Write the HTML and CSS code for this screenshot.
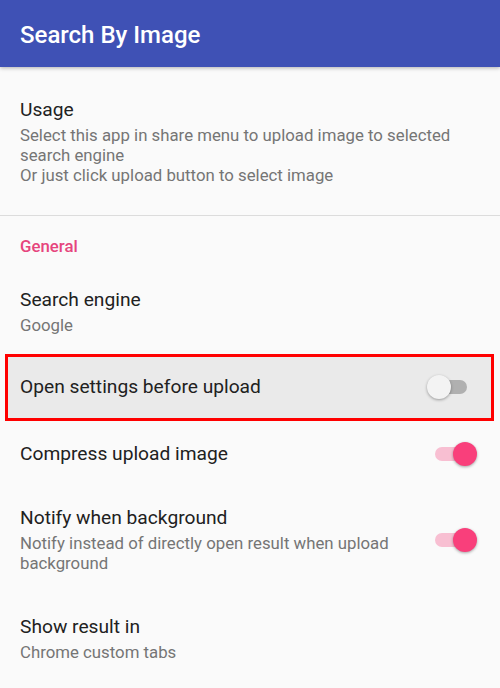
FILE: index.html
```html
<!DOCTYPE html>
<html>
<head>
	<meta charset="utf-8">
	<title>Search By Image</title>
	<link rel="stylesheet" href="styles.css">
</head>
<body>
	<div class="toolbar">
		<h1>Search By Image</h1>
	</div>
	<div class="prefs">
		<div class="item usage">
			<div class="text">
				<div class="title">Usage</div>
				<div class="summary">Select this app in share menu to upload image to selected search engine<br>Or just click upload button to select image</div>
			</div>
		</div>
		<div class="divider"></div>
		<div class="category">General</div>
		<div class="item engine">
			<div class="text">
				<div class="title">Search engine</div>
				<div class="summary">Google</div>
			</div>
		</div>
		<div class="highlight">
			<div class="item">
				<div class="text">
					<div class="title">Open settings before upload</div>
				</div>
				<div class="switch">
					<div class="track"></div>
					<div class="thumb"></div>
				</div>
			</div>
		</div>
		<div class="item compress">
			<div class="text">
				<div class="title">Compress upload image</div>
			</div>
			<div class="switch on">
				<div class="track"></div>
				<div class="thumb"></div>
			</div>
		</div>
		<div class="item notify">
			<div class="text">
				<div class="title">Notify when background</div>
				<div class="summary">Notify instead of directly open result when upload background</div>
			</div>
			<div class="switch on">
				<div class="track"></div>
				<div class="thumb"></div>
			</div>
		</div>
		<div class="item result">
			<div class="text">
				<div class="title">Show result in</div>
				<div class="summary">Chrome custom tabs</div>
			</div>
		</div>
	</div>
</body>
</html>
```
FILE: styles.css
```css
body{
	margin: 0;
	background-color: #fafafa;
	font-family: Roboto, "Noto Sans", sans-serif;
	overflow: hidden;
}
.toolbar{
	position: relative;
	z-index: 2;
	display: flex;
	align-items: center;
	height: 67px;
	padding: 0 20px;
	background-color: #3f51b5;
	box-shadow: 0 1px 4px rgba(0, 0, 0, 0.3);
}
.toolbar h1{
	margin: 2px 0 0;
	font-size: 24px;
	line-height: 28px;
	font-weight: 500;
	color: #fff;
}
.item{
	display: flex;
	align-items: center;
	padding: 20px 23px 20px 20px;
}
.item .text{
	flex: 1;
}
.title{
	font-size: 19.2px;
	line-height: 24px;
	color: #212121;
}
.summary{
	margin-top: 3px;
	padding-right: 20px;
	font-size: 16.8px;
	line-height: 20px;
	color: #757575;
}
.usage{
	padding-top: 31px;
	padding-bottom: 30px;
}
.usage .summary{
	padding-right: 0;
}
.divider{
	height: 1px;
	background-color: #dcdcdc;
}
.category{
	padding: 20px 20px 12px;
	font-size: 16.8px;
	line-height: 20px;
	font-weight: 500;
	color: #e6457d;
}
.engine{
	padding-bottom: 19px;
}
.highlight{
	margin: 0 6px 0 5px;
	border: 3px solid #f00;
	background-color: #eaeaea;
}
.highlight .item{
	padding: 18px 22px 19px 12px;
}
.compress{
	padding-top: 21px;
}
.notify{
	padding-bottom: 22px;
}
.switch{
	position: relative;
	width: 42px;
	height: 24px;
	flex-shrink: 0;
}
.switch .track{
	position: absolute;
	top: 5px;
	left: 4px;
	width: 36px;
	height: 14px;
	border-radius: 7px;
	background-color: #b0b0b0;
}
.switch .thumb{
	position: absolute;
	top: 0;
	left: 0;
	width: 24px;
	height: 24px;
	border-radius: 50%;
	background-color: #f3f3f3;
	box-shadow: 0 1px 3px rgba(0, 0, 0, 0.35);
}
.switch.on .track{
	left: 0;
	background-color: #f8bfd2;
}
.switch.on .thumb{
	left: auto;
	right: 0;
	background-color: #f93f7b;
}
```
